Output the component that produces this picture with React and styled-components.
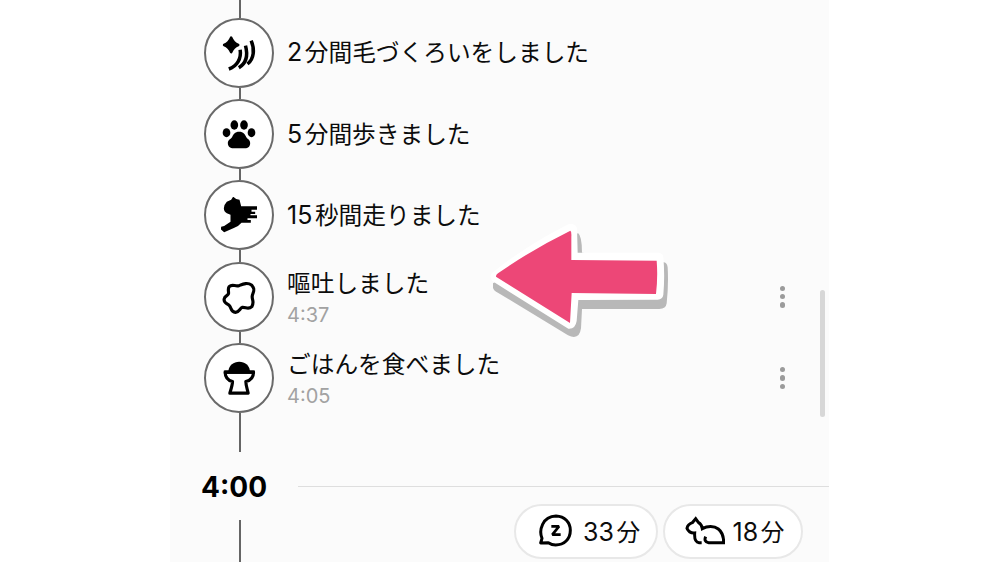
import React from "react";
import styled, { createGlobalStyle } from "styled-components";

const GlobalStyle = createGlobalStyle`
  * {
    box-sizing: border-box;
  }
  body {
    margin: 0;
    background-color: #fff;
    overflow: hidden;
    font-family: Inter, "Noto Sans CJK JP", sans-serif;
  }
`;

const Container = styled.div`
  height: 562px;
  display: flex;
  justify-content: center;
`;

const Panel = styled.div`
  position: relative;
  width: 659px;
  margin-right: 1px;
  height: 100%;
  overflow: hidden;
  background-color: #fbfbfb;
  color: #0c0c0c;
`;

const Timeline = styled.div`
  padding-left: 34px;
`;

const Line = styled.div`
  width: 2px;
  margin-left: 35px;
  height: ${(props) => (props.$height ? `${props.$height}px` : "auto")};
  flex: ${(props) => (props.$height ? "none" : 1)};
  background-color: #656565;
`;

const Row = styled.div`
  display: flex;
  height: 81.35px;
`;

const Track = styled.div`
  width: 70px;
  display: flex;
  flex-direction: column;
`;

const Circle = styled.div`
  width: 70px;
  height: 70px;
  flex: none;
  border: 2px solid #6a6a6a;
  border-radius: 50%;
  background-color: #fff;
  display: flex;
  align-items: center;
  justify-content: center;
`;

const Icon = styled.svg`
  width: 36px;
  height: 36px;
  display: block;
`;

const Info = styled.div`
  flex: 1;
  padding-left: 13px;
  display: flex;
  flex-direction: column;
  justify-content: center;
`;

const Title = styled.div`
  font-size: 23.7px;
  line-height: 30px;
  white-space: nowrap;
`;

const Amount = styled.span`
  font-size: 25px;
  margin-right: 2.5px;
`;

const Time = styled.div`
  margin-top: 3px;
  margin-bottom: -3px;
  font-size: 20px;
  line-height: 26px;
  color: #a2a2a2;
`;

const More = styled.div`
  width: 6px;
  margin-right: 43.5px;
  display: flex;
  flex-direction: column;
  justify-content: center;
  gap: 3.2px;
`;

const Dot = styled.span`
  width: 5.2px;
  height: 5.2px;
  border-radius: 50%;
  background-color: #9b9b9b;
`;

const Hour = styled.div`
  height: 68px;
  padding: 2px 0 0 31px;
  display: flex;
  align-items: center;
`;

const HourText = styled.div`
  width: 97px;
  font-size: 28px;
  font-weight: 700;
  color: #000;
`;

const Rule = styled.div`
  flex: 1;
  height: 1px;
  background-color: #dedede;
`;

const Footer = styled.div`
  display: flex;
  padding-right: 26px;
  justify-content: space-between;
`;

const Chips = styled.div`
  display: flex;
  gap: 5px;
  margin-top: -16px;
`;

const Chip = styled.div`
  width: ${(props) => props.$width}px;
  height: 55px;
  padding-left: ${(props) => props.$left}px;
  display: flex;
  align-items: center;
  gap: ${(props) => props.$gap}px;
  border: 2px solid #e8e8e8;
  border-radius: 28px;
  background-color: #fff;
  font-size: 23.7px;
  white-space: nowrap;
`;

const ChipIcon = styled.svg`
  flex: none;
  width: ${(props) => props.$width}px;
  height: 36px;
`;

const ScrollThumb = styled.div`
  position: absolute;
  top: 290px;
  right: 4px;
  width: 5px;
  height: 127px;
  border-radius: 3px;
  background-color: #d7d7d7;
`;

const Arrow = styled.svg`
  position: absolute;
  left: 310px;
  top: 220px;
  width: 200px;
  height: 125px;
`;

const GroomIcon = () => (
  <Icon viewBox="78.5 103 108 108">
    <path
      d="M109 111 Q115 126 130 133 Q115 139 109 154 Q103 139 88 133 Q103 126 109 111Z"
      stroke="#000"
      strokeWidth="8"
      strokeLinejoin="round"
    />
    <g fill="none" stroke="#000" strokeWidth="10.5">
      <path d="M136 147 C140 174 127 196 102 205" />
      <path d="M152 135 C160 165 154 188 132 201" />
      <path d="M169 120 C180 145 178 174 158 190" />
    </g>
  </Icon>
);

const PawIcon = () => (
  <Icon viewBox="78.5 77 108 108">
    <ellipse cx="118.5" cy="104" rx="11.5" ry="14" />
    <ellipse cx="147.5" cy="104" rx="11.5" ry="14" />
    <ellipse cx="95" cy="127" rx="11.5" ry="13.5" />
    <ellipse cx="170" cy="127" rx="11.5" ry="13.5" />
    <path d="M133 124 C146 124 151 132 154 140 C158 147 166 148 166 158 C166 168 160 174 150 174 H116 C106 174 99 168 99 158 C99 148 108 147 112 140 C115 132 120 124 133 124Z" />
  </Icon>
);

const RunIcon = () => (
  <Icon viewBox="78.5 76 108 108">
    <path d="M115 75 L124 82 L134 84 L139 104 H191 V114 H170 V120 H181 V127 H167 V131 H187 V140 H158 V145 H168 V153 H140 Q131 164 117 169 L88 182 L78 173 L79 165 L88 163 L107 150 V129 L96 125 Q87 120 87 110 Q87 99 96 90 L109 84Z" />
  </Icon>
);

const BlobIcon = () => (
  <Icon viewBox="78.5 78 108 108">
    <path
      d="M103 101 C113 91 121 102 132 98 C145 93 158 87 171 97 C184 111 173 118 172 131 C172 142 179 147 171 161 C160 171 153 162 143 163 C134 166 134 177 122 178 C106 177 111 164 103 157 C93 149 86 150 88 138 C90 128 98 130 101 122 C102 113 98 109 103 101Z"
      fill="none"
      stroke="#000"
      strokeWidth="9.5"
    />
  </Icon>
);

const BowlIcon = () => (
  <Icon viewBox="78.5 76.5 108 108">
    <path d="M101 113 V107 C103 94 116 82 133 82 C151 82 163 94 165 107 V113Z" />
    <path
      d="M91 113 H176 C176 129 169 137 153 141 C153 152 157 163 160 176 H105 C109 163 113 151 113 141 C98 137 91 129 91 113Z"
      fill="none"
      stroke="#000"
      strokeWidth="9.5"
      strokeLinejoin="round"
    />
    <path d="M87 108 H180 V118 H87Z" />
  </Icon>
);

const SleepIcon = () => (
  <ChipIcon $width={36} viewBox="98 58 108 108">
    <path
      d="M106 148 L110 134 C100 110 111 68 152 67 C178 68 195 86 195 110 C195 137 176 154 151 154 C142 154 135 151 129 147Z"
      fill="none"
      stroke="#000"
      strokeWidth="9"
      strokeLinejoin="round"
    />
    <path
      d="M138 98 H161 L141 123 H166"
      fill="none"
      stroke="#000"
      strokeWidth="8"
      strokeLinejoin="bevel"
    />
  </ChipIcon>
);

const CatIcon = () => (
  <ChipIcon $width={40} viewBox="539 58 120 108">
    <path
      d="M589 147 H581 C570 146 567 134 568 118 C557 119 549 113 545 104 Q547 92 561 87 L571 75 L579 86 Q589 91 591 105 C606 97 626 96 639 106 C653 117 655 130 655 147 H610 C599 146 597 138 601 129"
      fill="none"
      stroke="#000"
      strokeWidth="9"
    />
  </ChipIcon>
);

const events = [
  { icon: <GroomIcon />, amount: "2", text: "分間毛づくろいをしました" },
  { icon: <PawIcon />, amount: "5", text: "分間歩きました" },
  { icon: <RunIcon />, amount: "15", text: "秒間走りました" },
  { icon: <BlobIcon />, text: "嘔吐しました", time: "4:37" },
  { icon: <BowlIcon />, text: "ごはんを食べました", time: "4:05" },
];

const Event = ({ item }) => {
  return (
    <Row>
      <Track>
        <Line />
        <Circle>{item.icon}</Circle>
        <Line />
      </Track>
      <Info>
        <Title>
          {item.amount && <Amount>{item.amount}</Amount>}
          {item.text}
        </Title>
        {item.time && <Time>{item.time}</Time>}
      </Info>
      {item.time && (
        <More>
          <Dot />
          <Dot />
          <Dot />
        </More>
      )}
    </Row>
  );
};

const App = () => {
  return (
    <Container>
      <GlobalStyle />
      <Panel>
        <Timeline>
          <Line $height={12} />
          {events.map((item) => (
            <Event key={item.text} item={item} />
          ))}
          <Line $height={33} />
        </Timeline>
        <Hour>
          <HourText>4:00</HourText>
          <Rule />
        </Hour>
        <Footer>
          <Timeline>
            <Line $height={50} />
          </Timeline>
          <Chips>
            <Chip $width={144} $left={22} $gap={9}>
              <SleepIcon />
              <span>
                <Amount>33</Amount>分
              </span>
            </Chip>
            <Chip $width={140} $left={19.5} $gap={8}>
              <CatIcon />
              <span>
                <Amount>18</Amount>分
              </span>
            </Chip>
          </Chips>
        </Footer>
        <ScrollThumb />
        <Arrow viewBox="0 0 600 375">
          <path
            d="M39 190 V203 Q40 211 55 219 L264 346 Q298 362 303 325 L306 267 H538 Q558 267 560 250 Q566 195 563 142 Q561 127 550 127 L306 98 Q306 48 294 39 L270 60Z"
            fill="#b8b8b8"
          />
          <path
            d="M265 13 Q286 9 291 25 L293 98 H535 Q549 99 550 112 Q555 166 550 224 Q548 238 533 239 L295 240 L290 303 Q286 328 265 326 L38 184 Q25 169 37 158 Q140 76 265 13Z"
            fill="#fff"
          />
          <path
            d="M271 32 Q275 34 274 51 V120 L530 122 Q534 171 528 222 L275 219 L270 309 L48 170 Q47 166 54 160 Q157 88 271 32Z"
            fill="#ed4777"
          />
        </Arrow>
      </Panel>
    </Container>
  );
};

export default App;
